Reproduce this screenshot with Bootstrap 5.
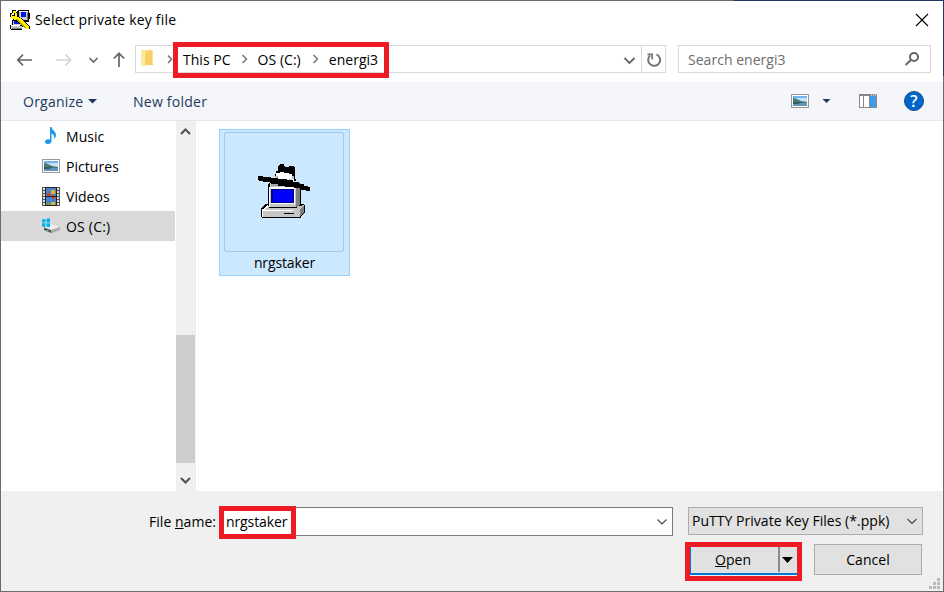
<!DOCTYPE html>
<html lang="en">
<head>
<meta charset="utf-8">
<title>Select private key file</title>
<link href="https://cdn.jsdelivr.net/npm/bootstrap@5.3.0/dist/css/bootstrap.min.css" rel="stylesheet">
<style>
body{font-family:"Open Sans","Noto Sans",sans-serif;font-size:14px;line-height:20px;color:#000;letter-spacing:.03px;overflow:hidden}
svg{display:block;flex:none}
.dialog{width:944px;height:592px;border:1px solid #6b6b6b;background:#fff}
.edge{left:734px;top:0;width:210px;height:1px;background:#1f3864}
.edge-right{left:943px;top:0;width:1px;height:76px;background:#1f3864}
.titlebar{height:37px;padding-left:9px}
.title-text{margin-left:5px;letter-spacing:.19px}
.close-ico{margin-right:14px}
.addr-row{height:44px;padding:7px 12px 0 0}
.nav-icons{width:134px}
.addr-box,.search-box{height:28px;border:1px solid #d9d9d9;background:#fff}
.addr-box span,.search-box span,.side-item span,.tools span{padding-top:2px}
.crumb{letter-spacing:.03px}
.addr-box{width:531px}
.refresh{width:24px;height:26px;border-left:1px solid #d9d9d9}
.search-box{width:253px;margin-left:12px;padding:0 10px 0 9px;color:#6d6d6d}
.tools{height:39px;background:#f4f6f9;border-bottom:1px solid #e5e7ea;color:#1e395b;letter-spacing:.24px}
.organize{width:60px;margin-left:22px}
.new-folder{margin-left:28px}
.pane{height:370px}
.side{width:174px}
.side-item{height:30px;padding-left:41px;letter-spacing:.05px}
.side-item.picked{background:#d9d9d9;letter-spacing:.2px}
.side-item span{margin-left:6px}
.track{width:20px;background:#f0f0f0;margin-left:1px}
.thumb{width:19px;height:128px;margin-top:193px;background:#cdcdcd}
.splitter{width:3px;border-right:1px solid #f8f8f8}
.files{padding:8px 0 0 20px}
.tile{width:131px;height:147px;background:#cce8ff;border:1px solid #99d1ff;padding:2px 0 0 4px}
.thumb-frame{width:120px;height:120px;border:1px solid #a9c8df;border-radius:2px}
.tile-label{width:121px;margin-top:1px;letter-spacing:-.12px}
.foot{height:100px;background:#f0f0f0;padding-top:16px}
.name-label{width:215px;height:29px}
.name-box{width:453px;height:29px;margin-left:4px;border:1px solid #7a7a7a;background:#fff;padding:0 5px;letter-spacing:-.1px}
.type-box{width:235px;height:28px;margin-left:15px;border:1px solid #adadad;background:#e1e1e1;padding:0 5px 0 3px}
.actions{margin-top:8px;padding-right:21px}
.b-open,.b-cancel{height:31px;background:#e1e1e1}
.b-open{width:110px;border:2px solid #0078d7;margin-right:15px}
.b-open-text{width:87px;padding-right:3px}
.b-drop{width:19px;height:25px;border-left:2px solid #8a8a8a}
.b-cancel{width:108px;border:1px solid #adadad}
.marker{border:5px solid #ed1c24}
.m1{left:173px;top:42px;width:216px;height:36px}
.m2{left:219px;top:506px;width:77px;height:33px}
.m3{left:685px;top:542px;width:117px;height:39px}
.grip{left:929px;top:577px}
</style>
<script src="https://cdn.jsdelivr.net/npm/bootstrap@5.3.0/dist/js/bootstrap.bundle.min.js"></script>
</head>
<body>
<svg class="d-none">
 <symbol id="picture" viewBox="0 0 18 14"><path fill="#999" d="M0 0h18v14H0z"/><path fill="#fff" d="M1 1h16v12H1z"/><path fill="#72b2ef" d="M2 2h14v5H2z"/><path fill="#c5e3f7" d="M5 4h11v4H5z"/><path fill="#487a70" d="M2 4l4 1 4 2 6 1v1H2z"/><path fill="#6196b8" d="M2 9h14v3H2z"/><path fill="#315e63" d="M2 8h9l-4 2H2z"/></symbol>
</svg>
<div class="dialog position-relative d-flex flex-column">
 <header class="titlebar d-flex align-items-center">
  <svg width="20" height="20" viewBox="0 0 20 20" shape-rendering="crispEdges">
   <path d="M8 0h11v3h1v6h-1v3h-8V9H7V1zM2 10h9v1h2v6h-1v3H1v-1H0v-4h2z"/>
   <path fill="#c8c8c8" d="M9 1h9v9H9zM3 11h8v4H3zM1 16h11v3H1z"/>
   <path fill="#fff" d="M9 1h9v1H9zM1 15h9v1H1z"/><path fill="#0018e8" d="M11 2h5v5h-5zM4 11h5v3H4z"/>
   <path fill="#777" d="M2 18h10v1H2zM17 3h1v7h-1z"/>
   <path d="M2 0h4v2h2v4l3 2 9 8v3h-3L7 12 4 10 0 7V3h2v2h2V3H2z"/>
   <path fill="#fff000" d="M3 1h3v2h1v4l3 1 9 9v2h-2L7 10H4V9H2V8H1V4h1v2h3V3H3z"/>
   <path fill="#b8a800" d="M5 9h2l9 9h-1z"/>
  </svg>
  <span class="title-text">Select private key file</span>
  <svg class="close-ico ms-auto" width="14" height="14" viewBox="0 0 14 14" stroke="#000" stroke-width="1.1"><path d="M1 1l12 12M13 1L1 13"/></svg>
 </header>

 <div class="addr-row d-flex">
  <div class="nav-icons">
   <svg width="134" height="28" viewBox="0 0 134 28" fill="none" stroke="#666" stroke-width="1.7">
    <path d="M16.500 15H31M22 9.700L16.800 15L22 20.300"/>
    <path stroke="#d5d5d5" d="M55 15h14M64.500 9.700L69.700 15L64.500 20.300"/>
    <path d="M88.500 13l4 4 4-4"/><path d="M118 22V8.500M112.800 13.500L118 8.300L123.200 13.500"/>
   </svg>
  </div>
  <div class="addr-box d-flex align-items-center">
   <svg width="47" height="26" viewBox="0 0 47 26"><path fill="#fce294" d="M6 4h11v14l-8 1H6z"/><path fill="#ffe9a2" d="M5 4l4 2v15l-4-2z"/><path fill="#f7cf67" d="M9 6l7-2v14h1v1H9z"/><path fill="none" stroke="#777" stroke-width="1.600" d="M32 9.500l3.500 3.700L32 17"/></svg>
   <span class="crumb">This PC</span>
   <svg width="27" height="26" viewBox="0 0 27 26" fill="none" stroke="#777" stroke-width="1.500"><path d="M11.500 9l4 4-4 4"/></svg>
   <span class="crumb">OS (C:)</span>
   <svg width="28" height="26" viewBox="0 0 28 26" fill="none" stroke="#777" stroke-width="1.500"><path d="M12.500 9l4 4-4 4"/></svg>
   <span class="crumb">energi3</span>
   <svg class="ms-auto" width="22" height="26" viewBox="0 0 22 26" fill="none" stroke="#666" stroke-width="1.800"><path d="M5.500 12l5 5 5-5"/></svg>
   <div class="refresh">
    <svg width="23" height="26" viewBox="0 0 23 26" fill="none" stroke="#777" stroke-width="2"><path d="M14.500 8.300A6 6 0 1 1 8 9.500"/><path stroke-width="1.700" d="M5.500 8.400h4.700v5"/></svg>
   </div>
  </div>
  <div class="search-box d-flex align-items-center justify-content-between">
   <span>Search energi3</span>
   <svg width="16" height="16" viewBox="0 0 16 16" fill="none" stroke="#666" stroke-width="2"><circle cx="10" cy="6" r="4"/><path d="M7 9l-5.500 5"/></svg>
  </div>
 </div>

 <div class="tools d-flex align-items-center">
  <span class="organize">Organize</span>
  <svg width="22" height="20" viewBox="0 0 22 20" fill="#1e395b"><path d="M5 8h9l-4.500 4.500z"/></svg>
  <span class="new-folder">New folder</span>
  <svg class="ms-auto" width="152" height="38" viewBox="0 0 152 38">
   <use href="#picture" x="0" y="12" width="18" height="14"/>
   <path fill="#1e395b" d="M31.500 17h8l-4 4z"/>
   <path fill="#888" d="M68 12h18v14H68z"/><path fill="#fff" d="M69 14h3v11h-3zM73 14h5v11h-5z"/><path fill="#3f9be5" d="M79 14h6v11h-6z"/><path fill="#fff" d="M80 12.500h1v1h-1zM82 12.500h1v1h-1zM84 12.500h1v1h-1z"/>
   <circle cx="123" cy="19" r="9.500" fill="#0067c9" stroke="#164f87"/><text x="123" y="25" fill="#fff" font-size="16" font-weight="600" text-anchor="middle">?</text>
  </svg>
 </div>

 <div class="pane d-flex">
  <nav class="side">
   <div class="side-item d-flex align-items-center"><svg width="18" height="20" viewBox="0 0 18 20"><path fill="#1b98ed" d="M8 1h1.500c.3 3.500 4.500 4 4.500 8 0 2-1 3-2 4 .8-3-.3-4.500-2.500-5.500V15c0 2-1.500 3-3.500 3-1.800 0-3-1-3-2.300 0-2 2.500-3.200 5-2.200z"/></svg><span>Music</span></div>
   <div class="side-item d-flex align-items-center"><svg width="18" height="14"><use href="#picture"/></svg><span>Pictures</span></div>
   <div class="side-item d-flex align-items-center"><svg width="18" height="19" viewBox="0 0 18 19" shape-rendering="crispEdges"><path fill="#555" d="M0 0h18v19H0z"/><path stroke="#ddd" stroke-width="2" stroke-dasharray="2 1" d="M2 1v18M16 1v18"/><path fill="#222" d="M3 0h12v19H3z"/><path fill="#4a83d0" d="M4 1h10v8H4zM4 10h10v8H4z"/><path fill="#e0b52e" d="M9 3h4v4H9zM9 15h4v3H9z"/><path fill="#cf4137" d="M5 6h3v3H5zM9 7h3v2H9zM10 10h3v2h-3z"/><path fill="#65a03f" d="M8 8h3v1H8zM4 16h4v2H4z"/></svg><span>Videos</span></div>
   <div class="side-item picked d-flex align-items-center"><svg width="18" height="16" viewBox="0 0 18 16"><path fill="#eee" d="M2 9l6-3 10 3-9 3z"/><path fill="#555" d="M2 9.500l7 2.500v3l-7-3z"/><path fill="#aaa" d="M9 12l9-3v3l-9 3.500z"/><path fill="#3f9" d="M5 12h1.500v1H5z"/><path fill="#00b2ed" d="M0 1.500l3.500-.5v3.500H0zM4.500.8L8 .3v4.200H4.500zM0 5.300h3.500V9L0 8.500zM4.500 5.300H8v4L4.500 9z"/></svg><span>OS (C:)</span></div>
  </nav>
  <div class="track d-flex flex-column">
   <svg width="20" height="21" viewBox="0 0 20 21" fill="none" stroke="#505050" stroke-width="2"><path d="M5 13l4.500-4.500L14 13"/></svg>
   <div class="thumb"></div>
   <svg class="mt-auto" width="20" height="21" viewBox="0 0 20 21" fill="none" stroke="#505050" stroke-width="2"><path d="M5 8l4.500 4.500L14 8"/></svg>
  </div>
  <div class="splitter"></div>
  <main class="files">
   <div class="tile d-flex flex-column">
    <div class="thumb-frame d-flex">
     <svg width="118" height="118" viewBox="-25 -22 118 118" shape-rendering="crispEdges">
      <path d="M20 27h29l2 3v19h3v1h1v7l-4 4v2H12v-1h-1v-9l5-4h2V29z"/>
      <path fill="#c6c6c6" d="M20 28h28v24H20zM17 51h35v-1h2v7l-4 5H13v-8z"/>
      <path fill="#fff" d="M19 32h27v1H20v19h-1zM12 54h1l4-4h1v3h-2l-2 2h29v1H13v6h-1z"/>
      <path fill="#808080" d="M46 33h4v17l-4 3zM50 54l4-4v7l-4 4z"/>
      <path fill="#a8a8a8" d="M22 28h24v3H21z"/>
      <path d="M19 52h28v1H19zM34 58h10v1H34z"/>
      <path fill="#fff" d="M21 33h24v16H21z"/><path fill="#000080" d="M21 34h23v14H21z"/><path fill="#00f" d="M23 35h20v12H23z"/>
      <path d="M29 10h1V9h4v2h1v1h4v-1h5v1h1v12h1v2H25v-7h1v-3h2v-5h1z"/>
      <path fill="#fff" d="M26 18h4v-1h4v1h5v1h3v2h2v5h-6v-1h-8v-1h-5z"/><path fill="#bbb" d="M25 21h3v2h-3zM39 24h3v2h-3zM42 21h2v3h-2z"/>
      <path d="M8 21h5v1h8v1h7v1h9v1h6v2h6v2h5v2h4v1h2v4h-4v-1h-6v-2h-6v-1h-9v-1h-7v-2h-7v-2h-8v-1h-4v-1H8z"/>
     </svg>
    </div>
    <span class="tile-label text-center">nrgstaker</span>
   </div>
  </main>
 </div>

 <footer class="foot">
  <div class="d-flex">
   <div class="name-label d-flex align-items-center justify-content-end"><span>File <u>n</u>ame:</span></div>
   <div class="name-box d-flex align-items-center justify-content-between"><span>nrgstaker</span><svg width="10" height="8" viewBox="0 0 10 8" fill="none" stroke="#444" stroke-width="1.100"><path d="M.5 1.500L5 6 9.500 1.500"/></svg></div>
   <div class="type-box d-flex align-items-center justify-content-between"><span>PuTTY Private Key Files (*.ppk)</span><svg width="10" height="8" viewBox="0 0 10 8" fill="none" stroke="#444" stroke-width="1.100"><path d="M.5 2L5 6.500 9.500 2"/></svg></div>
  </div>
  <div class="actions d-flex justify-content-end">
   <div class="b-open d-flex align-items-center"><span class="b-open-text text-center"><u>O</u>pen</span><span class="b-drop d-flex align-items-center"><svg width="15" height="8" viewBox="0 0 15 8"><path d="M2 1h11L7.500 7z"/></svg></span></div>
   <div class="b-cancel d-flex align-items-center justify-content-center">Cancel</div>
  </div>
 </footer>
</div>
<div class="position-absolute edge"></div>
<div class="position-absolute edge-right"></div>
<div class="position-absolute marker m1"></div>
<div class="position-absolute marker m2"></div>
<div class="position-absolute marker m3"></div>
<svg class="position-absolute grip" width="12" height="12" fill="#b8b8b8"><path d="M8 1h3v3H8zM4 5h3v3H4zM8 5h3v3H8zM0 9h3v3H0zM4 9h3v3H4zM8 9h3v3H8z"/></svg>
</body>
</html>
